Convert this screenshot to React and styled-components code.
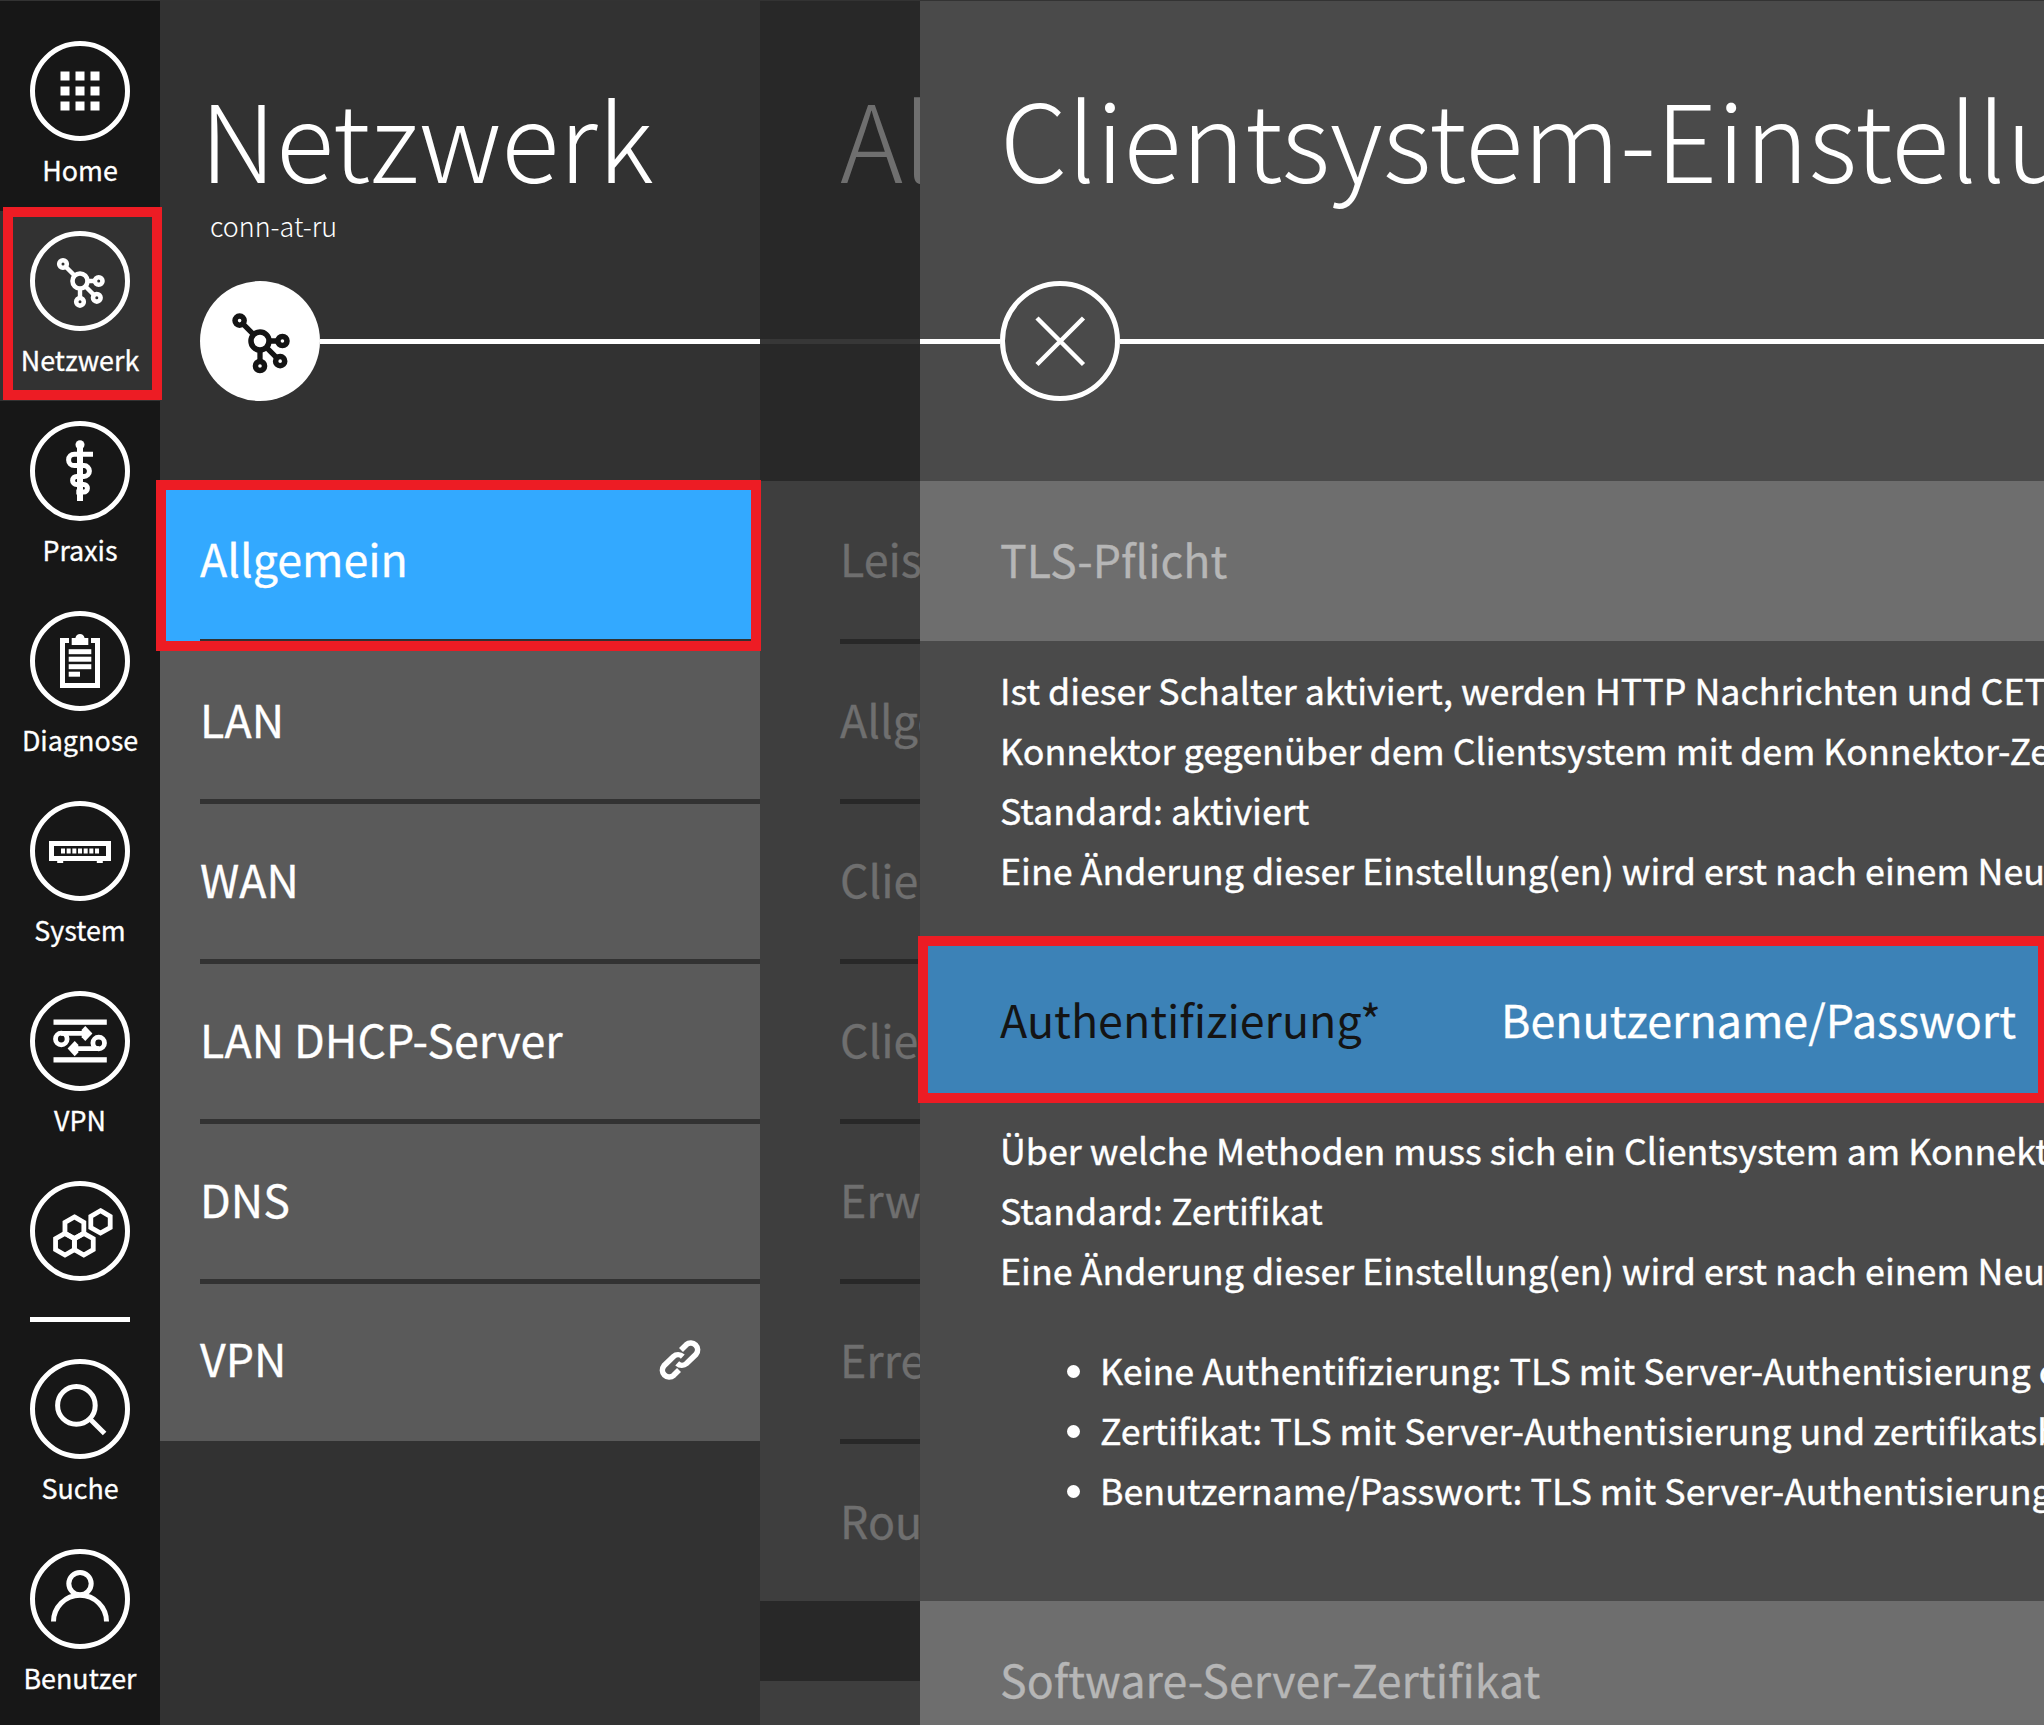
import React from "react";
import styled, { createGlobalStyle } from "styled-components";

const Global = createGlobalStyle`
  * { box-sizing: border-box; }
  body {
    margin: 0;
    background: #333333;
    overflow: hidden;
    font-family: "Noto Sans CJK SC", "Noto Sans", sans-serif;
    color: #ffffff;
  }
`;

const Page = styled.div`
  display: flex;
  width: 100vw;
  height: 100vh;
  min-height: 1725px;
  padding-top: 1px;
  overflow: hidden;
  white-space: nowrap;
`;

/* Navigation rail */

const Rail = styled.nav`
  flex: 0 0 160px;
  padding-top: 20px;
  background: #171717;
  position: relative;
  z-index: 1;
`;

const RailItem = styled.div`
  position: relative;
  display: flex;
  flex-direction: column;
  align-items: center;
  height: ${(p) => (p.$short ? 140 : 190)}px;
  padding-top: 20px;
  background: ${(p) => (p.$active ? "#323232" : "transparent")};
`;

const RailLabel = styled.span`
  margin-top: 9px;
  font-size: 26.86px;
  line-height: 39px;
  -webkit-text-stroke: 0.3px;
`;

const RailDivider = styled.hr`
  width: 100px;
  height: 5px;
  margin: 16px auto 17px;
  border: 0;
  background: #ffffff;
`;

const RingIcon = styled.svg`
  display: block;
  flex: none;
  width: ${(p) => p.$size}px;
  height: ${(p) => p.$size}px;
`;

/* Red highlight frame laid over a part of the page */
const Marker = styled.span`
  position: absolute;
  z-index: 2;
  left: ${(p) => p.$left}px;
  top: ${(p) => p.$top}px;
  width: ${(p) => p.$width}px;
  height: ${(p) => p.$height}px;
  border: 10px solid #ed1c24;
  pointer-events: none;
`;

/* Columns */

const Column = styled.section`
  flex: ${(p) => (p.$width ? `0 0 ${p.$width}px` : "1 1 0")};
  min-width: 0;
  overflow: ${(p) => (p.$clip ? "hidden" : "visible")};
  background: ${(p) => p.$bg};
  color: ${(p) => p.$color || "#ffffff"};
`;

const Header = styled.header`
  height: 480px;
  padding-top: 75px;
`;

const Title = styled.h1`
  height: 120px;
  margin: 0 0 0 ${(p) => p.$indent}px;
  font-size: 107.4px;
  font-weight: 300;
  line-height: 120px;
`;

const Subtitle = styled.div`
  height: 39px;
  margin: 10px 0 36px ${(p) => p.$indent}px;
  font-size: 26.86px;
  font-weight: 300;
  line-height: 39px;
`;

const Track = styled.div`
  display: flex;
  align-items: center;
  height: 120px;
`;

const TrackLine = styled.span`
  flex: ${(p) => (p.$width ? `0 0 ${p.$width}px` : "1 1 0")};
  height: 5px;
  margin-top: 1px;
  background: ${(p) => p.$color || "#ffffff"};
`;

const TrackGap = styled.span`
  flex: 0 0 40px;
`;

const Menu = styled.div`
  position: relative;
  background: ${(p) => p.$bg};
`;

const MenuRow = styled.div`
  display: flex;
  justify-content: space-between;
  align-items: center;
  height: 160px;
  padding: 0 59px ${(p) => p.$lift ?? 5}px ${(p) => p.$indent}px;
  background: ${(p) => (p.$selected ? "#33a9ff" : "transparent")};
  font-size: 44.76px;
  line-height: 65px;
  -webkit-text-stroke: 0.3px;
`;

const MenuRule = styled.div`
  height: 5px;
  margin: -2px 0 -3px ${(p) => p.$indent}px;
  background: ${(p) => p.$color};
`;

const MenuLinkIcon = styled.svg`
  width: 42px;
  height: 42px;
  margin-top: 4px;
`;

const NextMenu = styled.div`
  height: 60px;
  margin-top: 80px;
  background: #3e3e3e;
`;

/* Settings panel */

const SettingHead = styled.div`
  height: 160px;
  padding-left: 80px;
  background: #6e6e6e;
  color: #b6b6b6;
  font-size: 44.7px;
  line-height: 155px;
  -webkit-text-stroke: 0.3px;
`;

const SettingField = styled.div`
  position: relative;
  display: flex;
  height: 160px;
  padding-left: 80px;
  background: #3c82b7;
  font-size: 44.76px;
  line-height: 155px;
`;

const FieldName = styled.span`
  flex: 0 0 501px;
  color: #141414;
`;

const FieldValue = styled.span`
  -webkit-text-stroke: 0.3px;
`;

const Note = styled.div`
  height: ${(p) => p.$height}px;
  padding: 18px 0 0 80px;
  font-size: 35.8px;
  line-height: 60px;
  -webkit-text-stroke: 0.4px;
`;

const NoteLine = styled.div`
  height: 60px;
`;

const Bullets = styled.ul`
  margin: 40px 0 0;
  padding: 0;
  list-style: none;
`;

const Bullet = styled.li`
  display: flex;
  align-items: center;
  height: 60px;
  padding-left: 67px;

  &::before {
    content: "";
    flex: none;
    width: 13px;
    height: 13px;
    margin: 5px 20px 0 0;
    border-radius: 50%;
    background: #ffffff;
  }
`;

/* Icon drawings on a 100 × 100 grid */

const hexagon = (cx, cy, r) =>
  [0, 1, 2, 3, 4, 5]
    .map((i) => {
      const a = (Math.PI / 3) * i - Math.PI / 2;
      return `${(cx + r * Math.cos(a)).toFixed(2)},${(cy + r * Math.sin(a)).toFixed(2)}`;
    })
    .join(" ");

const HomeGlyph = () => (
  <g fill="#fff">
    {[30.5, 45.5, 60.5].map((y) =>
      [30.5, 45.5, 60.5].map((x) => <rect key={`${x}-${y}`} x={x} y={y} width="9" height="9" />)
    )}
  </g>
);

const NetworkGlyph = ({ color = "#fff" }) => (
  <g fill="none" stroke={color} strokeWidth="4.6">
    <path strokeWidth="4.4" d="M36 36l8.5 8.5M57 50h8M55.5 55.5l8.5 8.5M50 57v10" />
    <circle cx="50" cy="50" r="7.5" />
    <circle cx="33" cy="33" r="3.8" />
    <circle cx="68.7" cy="50" r="3.8" />
    <circle cx="66.8" cy="66.8" r="3.8" />
    <circle cx="50" cy="70.8" r="3.8" />
  </g>
);

const PraxisGlyph = () => (
  <g>
    <circle cx="50" cy="23.7" r="4.5" fill="#fff" />
    <rect x="47" y="24" width="6" height="56" fill="#fff" />
    <path
      fill="none"
      stroke="#fff"
      strokeWidth="5"
      d="M63 33.2H44.3a5.7 5.7 0 0 0 0 11.4H54a5.4 5.4 0 0 1 0 10.8H46.6a4 4 0 0 0 0 8H53.6a3.8 3.8 0 0 1 0 7.6H46.3"
    />
  </g>
);

const DiagnoseGlyph = () => (
  <g fill="#fff">
    <path fill="none" stroke="#fff" strokeWidth="5" d="M39 29.5H32.5V74.5H67.5V29.5H61" />
    <path d="M41.7 27H45.4C46 24.5 47.6 23 50 23S54 24.5 54.6 27H58.3V34H41.7Z" />
    <rect x="38.7" y="38.2" width="22.6" height="5" />
    <rect x="38.7" y="45.7" width="22.6" height="5" />
    <rect x="38.7" y="53.2" width="22.6" height="5" />
    <rect x="38.7" y="60.7" width="11.3" height="5" />
  </g>
);

const SystemGlyph = () => (
  <g fill="#fff">
    <rect x="21.5" y="42.5" width="57" height="15" fill="none" stroke="#fff" strokeWidth="5" />
    <rect x="27.2" y="59.5" width="6" height="2.5" />
    <rect x="66.8" y="59.5" width="6" height="2.5" />
    {[0, 1, 2, 3, 4, 5, 6].map((i) => (
      <rect key={i} x={31 + 5.67 * i} y="47.5" width="4" height="5" />
    ))}
  </g>
);

const VpnGlyph = () => (
  <g fill="#fff">
    <rect x="23.5" y="28.5" width="53.3" height="5.3" />
    <rect x="23.5" y="66.2" width="53.3" height="5.3" />
    <g fill="none" stroke="#fff" strokeWidth="4.8">
      <circle cx="31.3" cy="48" r="5.8" />
      <circle cx="68.7" cy="52" r="5.8" />
      <path d="M31 42.3H54M69 57.7H46" />
    </g>
    <path d="M51.7 38.7L55.3 35L62.4 42.4L55.3 50L51.7 46.2Z" />
    <path d="M48.3 53.8L44.7 50L37.6 57.6L44.7 65.2L48.3 61.4Z" />
  </g>
);

const ModulesGlyph = () => (
  <g fill="none" stroke="#fff" strokeWidth="4.8">
    <polygon points={hexagon(44.4, 46.8, 10.9)} />
    <polygon points={hexagon(35, 63.2, 10.9)} />
    <polygon points={hexagon(53.8, 63.2, 10.9)} />
    <polygon points={hexagon(70.5, 40.9, 11.2)} />
  </g>
);

const SearchGlyph = () => (
  <g fill="none" stroke="#fff" strokeWidth="5">
    <circle cx="46.4" cy="46.4" r="18.8" />
    <path d="M59.5 59.5L74.6 74.6" />
  </g>
);

const UserGlyph = () => (
  <g fill="none" stroke="#fff" strokeWidth="5">
    <circle cx="50" cy="34.6" r="11.2" />
    <path d="M23.5 72.5A26.5 26.3 0 0 1 76.5 72.5" />
  </g>
);

const Ring = ({ children }) => (
  <RingIcon $size={100} viewBox="0 0 100 100">
    <circle cx="50" cy="50" r="47.5" fill="none" stroke="#fff" strokeWidth="5" />
    {children}
  </RingIcon>
);

const mainNav = [
  { label: "Home", Glyph: HomeGlyph },
  { label: "Netzwerk", Glyph: NetworkGlyph, active: true },
  { label: "Praxis", Glyph: PraxisGlyph },
  { label: "Diagnose", Glyph: DiagnoseGlyph },
  { label: "System", Glyph: SystemGlyph },
  { label: "VPN", Glyph: VpnGlyph },
];

const userNav = [
  { label: "Suche", Glyph: SearchGlyph },
  { label: "Benutzer", Glyph: UserGlyph },
];

const networkMenu = [
  { label: "Allgemein", selected: true, lift: 7 },
  { label: "LAN" },
  { label: "WAN" },
  { label: "LAN DHCP-Server" },
  { label: "DNS" },
  { label: "VPN", linked: true, lift: 7 },
];

const generalMenu = [
  { label: "Leis", lift: 7 },
  { label: "Allge" },
  { label: "Clie" },
  { label: "Clie" },
  { label: "Erw" },
  { label: "Erre" },
  { label: "Rou", lift: 3 },
];

const NavEntry = ({ label, Glyph, active }) => (
  <RailItem $active={active}>
    <Ring>
      <Glyph />
    </Ring>
    <RailLabel>{label}</RailLabel>
    {active && <Marker $left={3} $top={-4} $width={159} $height={193} />}
  </RailItem>
);

const MenuEntries = ({ items, indent, rule }) =>
  items.map(({ label, selected, linked, lift }, i) => (
    <React.Fragment key={i}>
      {i > 0 && <MenuRule $indent={indent} $color={rule} />}
      <MenuRow $indent={indent} $selected={selected} $lift={lift}>
        {label}
        {linked && (
          <MenuLinkIcon viewBox="0 0 42 42" fill="none" stroke="#fff" strokeWidth="5.6">
            <path d="M22 11L27.3 5.7A6.85 6.85 0 0 1 37 15.3L27.5 24.5A6.85 6.85 0 0 1 18.2 24.4" />
            <path d="M20 31L14.7 36.3A6.85 6.85 0 0 1 5 26.7L14.5 17.5A6.85 6.85 0 0 1 23.8 17.6" />
          </MenuLinkIcon>
        )}
      </MenuRow>
    </React.Fragment>
  ));

export default function App() {
  return (
    <Page>
      <Global />
      <Rail>
        {mainNav.map((item) => (
          <NavEntry key={item.label} {...item} />
        ))}
        <RailItem $short>
          <Ring>
            <ModulesGlyph />
          </Ring>
        </RailItem>
        <RailDivider />
        {userNav.map((item) => (
          <NavEntry key={item.label} {...item} />
        ))}
      </Rail>

      <Column $width={600} $bg="#323232">
        <Header>
          <Title $indent={40}>Netzwerk</Title>
          <Subtitle $indent={50}>conn-at-ru</Subtitle>
          <Track>
            <TrackGap />
            <RingIcon $size={120} viewBox="0 0 100 100">
              <circle cx="50" cy="50" r="50" fill="#fff" />
              <NetworkGlyph color="#141414" />
            </RingIcon>
            <TrackLine />
          </Track>
        </Header>
        <Menu $bg="#5a5a5a">
          <Marker $left={-4} $top={-1} $width={605} $height={171} />
          <MenuEntries items={networkMenu} indent={40} rule="#323232" />
        </Menu>
      </Column>

      <Column $width={160} $bg="#282828" $color="#6f6f6f" $clip>
        <Header>
          <Title $indent={80}>All</Title>
          <Subtitle $indent={80} />
          <Track>
            <TrackLine $color="#373737" />
          </Track>
        </Header>
        <Menu $bg="#3e3e3e">
          <MenuEntries items={generalMenu} indent={80} rule="#282828" />
        </Menu>
        <NextMenu />
      </Column>

      <Column $bg="#4a4a4a">
        <Header>
          <Title $indent={80}>Clientsystem-Einstellu</Title>
          <Subtitle $indent={80} />
          <Track>
            <TrackLine $width={80} />
            <RingIcon $size={120} viewBox="0 0 120 120">
              <circle cx="60" cy="60" r="57.5" fill="none" stroke="#fff" strokeWidth="5" />
              <path d="M37 37L83.5 83.5M83.5 37L37 83.5" stroke="#fff" strokeWidth="4.5" />
            </RingIcon>
            <TrackLine />
          </Track>
        </Header>
        <SettingHead>TLS-Pflicht</SettingHead>
        <Note $height={300}>
          <NoteLine>Ist dieser Schalter aktiviert, werden HTTP Nachrichten und CET</NoteLine>
          <NoteLine>Konnektor gegenüber dem Clientsystem mit dem Konnektor-Ze</NoteLine>
          <NoteLine>Standard: aktiviert</NoteLine>
          <NoteLine>Eine Änderung dieser Einstellung(en) wird erst nach einem Neu</NoteLine>
        </Note>
        <SettingField>
          <FieldName>Authentifizierung*</FieldName>
          <FieldValue>Benutzername/Passwort</FieldValue>
          <Marker $left={-2} $top={-5} $width={1130} $height={167} />
        </SettingField>
        <Note $height={500}>
          <NoteLine>Über welche Methoden muss sich ein Clientsystem am Konnekt</NoteLine>
          <NoteLine>Standard: Zertifikat</NoteLine>
          <NoteLine>Eine Änderung dieser Einstellung(en) wird erst nach einem Neu</NoteLine>
          <Bullets>
            <Bullet>Keine Authentifizierung: TLS mit Server-Authentisierung o</Bullet>
            <Bullet>Zertifikat: TLS mit Server-Authentisierung und zertifikatsb</Bullet>
            <Bullet>Benutzername/Passwort: TLS mit Server-Authentisierung</Bullet>
          </Bullets>
        </Note>
        <SettingHead>Software-Server-Zertifikat</SettingHead>
      </Column>
    </Page>
  );
}
